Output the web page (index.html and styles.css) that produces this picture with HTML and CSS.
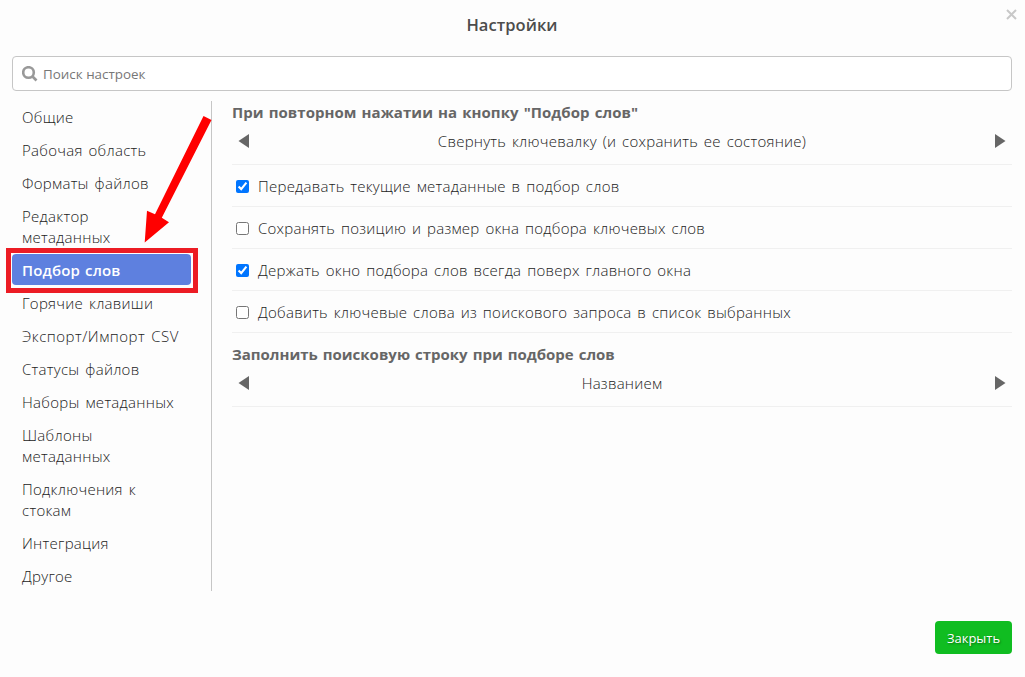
FILE: index.html
```html
<!DOCTYPE html>
<html lang="ru">
<head>
<meta charset="utf-8">
<title>Настройки</title>
<link rel="stylesheet" href="styles.css">
</head>
<body>
<div class="dialog">
  <header class="header">
    <h1 class="title">Настройки</h1>
    <svg class="close" width="11" height="11" viewBox="0 0 11 11"><path d="M1 1L10 10M10 1L1 10"/></svg>
  </header>
  <div class="search">
    <svg class="search-icon" width="16" height="16" viewBox="0 0 16 16"><circle cx="6.500" cy="6.500" r="5.300"/><path d="M10.500 10.500L14.500 14.500"/></svg>
    <span class="placeholder">Поиск настроек</span>
  </div>
  <div class="body">
    <nav class="nav">
      <a class="item">Общие</a>
      <a class="item">Рабочая область</a>
      <a class="item">Форматы файлов</a>
      <a class="item">Редактор<br>метаданных</a>
      <a class="item active">Подбор слов</a>
      <a class="item">Горячие клавиши</a>
      <a class="item export">Экспорт/Импорт CSV</a>
      <a class="item">Статусы файлов</a>
      <a class="item">Наборы метаданных</a>
      <a class="item">Шаблоны<br>метаданных</a>
      <a class="item">Подключения к<br>стокам</a>
      <a class="item">Интеграция</a>
      <a class="item">Другое</a>
    </nav>
    <main class="content">
      <section class="choice first">
        <h2 class="heading">При повторном нажатии на кнопку "Подбор слов"</h2>
        <div class="selector">
          <svg class="arrow" width="11" height="14" viewBox="0 0 11 14"><path d="M11 0V14L0.5 7Z"/></svg>
          <span class="value">Свернуть ключевалку (и сохранить ее состояние)</span>
          <svg class="arrow" width="11" height="14" viewBox="0 0 11 14"><path d="M0 0V14L10.5 7Z"/></svg>
        </div>
      </section>
      <label class="check"><input class="box" type="checkbox" checked><span>Передавать текущие метаданные в подбор слов</span></label>
      <label class="check"><input class="box" type="checkbox"><span>Сохранять позицию и размер окна подбора ключевых слов</span></label>
      <label class="check"><input class="box" type="checkbox" checked><span>Держать окно подбора слов всегда поверх главного окна</span></label>
      <label class="check"><input class="box" type="checkbox"><span>Добавить ключевые слова из поискового запроса в список выбранных</span></label>
      <section class="choice">
        <h2 class="heading fill-heading">Заполнить поисковую строку при подборе слов</h2>
        <div class="selector">
          <svg class="arrow" width="11" height="14" viewBox="0 0 11 14"><path d="M11 0V14L0.5 7Z"/></svg>
          <span class="value">Названием</span>
          <svg class="arrow" width="11" height="14" viewBox="0 0 11 14"><path d="M0 0V14L10.5 7Z"/></svg>
        </div>
      </section>
    </main>
  </div>
  <footer class="footer"><button class="button">Закрыть</button></footer>
  <svg class="pointer" width="80" height="140" viewBox="0 0 80 140"><path d="M63.500 6L71.500 10L21.800 107.800L29 112.300L4.700 132.500L7 100.700L15 104.300Z"/></svg>
  <div class="marker"></div>
</div>
</body>
</html>
```
FILE: styles.css
```css
* { box-sizing: border-box; }
body { margin: 0; background: #fdfdfd; color: #222; font: 300 15px/21px "Open Sans", "Noto Sans", sans-serif; }
.dialog { position: relative; height: 677px; padding: 0 13px 0 12px; overflow: hidden; }
.header { height: 56px; padding-top: 13px; text-align: center; }
.title { margin: 0; font-size: 16.5px; line-height: 24px; font-weight: 600; letter-spacing: .05px; color: #4c4c4c; }
.close { position: absolute; top: 9px; right: 8px; fill: none; stroke: #c8c8c8; stroke-width: 2; }
.search { display: flex; align-items: center; gap: 5px; height: 35px; padding-left: 9px; border: 1px solid #c6c6c6; border-radius: 4px; background: #fff; }
.search-icon { fill: none; stroke: #999; stroke-width: 2.6; }
.placeholder { padding-top: 2px; font-size: 13.4px; font-weight: 400; color: #777; }
.body { display: flex; height: 490px; margin-top: 10px; }
.nav { display: flex; flex-direction: column; gap: 2px; width: 200px; padding-right: 20px; border-right: 1px solid #c6c6c6; }
.item { padding: 6px 0 4px 10px; white-space: nowrap; letter-spacing: .28px; word-spacing: 1.7px; }
.export { letter-spacing: .5px; }
.active { border-radius: 4px; background: #5e80df; color: #fff; font-weight: 600; letter-spacing: .15px; word-spacing: 1px; }
.content { flex: 1; padding-left: 20px; letter-spacing: .25px; word-spacing: 1.7px; }
.choice { height: 74px; padding-top: 11px; border-bottom: 1px solid #f0f0f0; }
.first { height: 64px; padding-top: 1px; }
.heading { margin: 0 0 8px; font: inherit; font-weight: 700; letter-spacing: .05px; word-spacing: 1.1px; color: #666; }
.fill-heading { letter-spacing: 0; }
.selector { display: flex; align-items: center; justify-content: space-between; padding: 0 6px 0 6px; }
.arrow { margin-bottom: 1px; fill: #666; }
.check { display: flex; align-items: center; gap: 9px; height: 42px; padding: 2px 0 0 4px; border-bottom: 1px solid #f0f0f0; }
.box { width: 13px; height: 13px; margin: 0; }
.footer { display: flex; justify-content: flex-end; margin-top: 30px; }
.button { width: 77px; height: 33px; padding: 1px 0 0; border: 0; border-radius: 4px; background: #10bd21; color: #fff; font: 500 13px/21px "Open Sans", "Noto Sans", sans-serif; text-shadow: 1px 1px 2px #087810; }
.pointer { position: absolute; left: 140px; top: 110px; fill: #f00; }
.marker { position: absolute; left: 6px; top: 248px; width: 192px; height: 45px; border: 5px solid #ec1c24; }
```
